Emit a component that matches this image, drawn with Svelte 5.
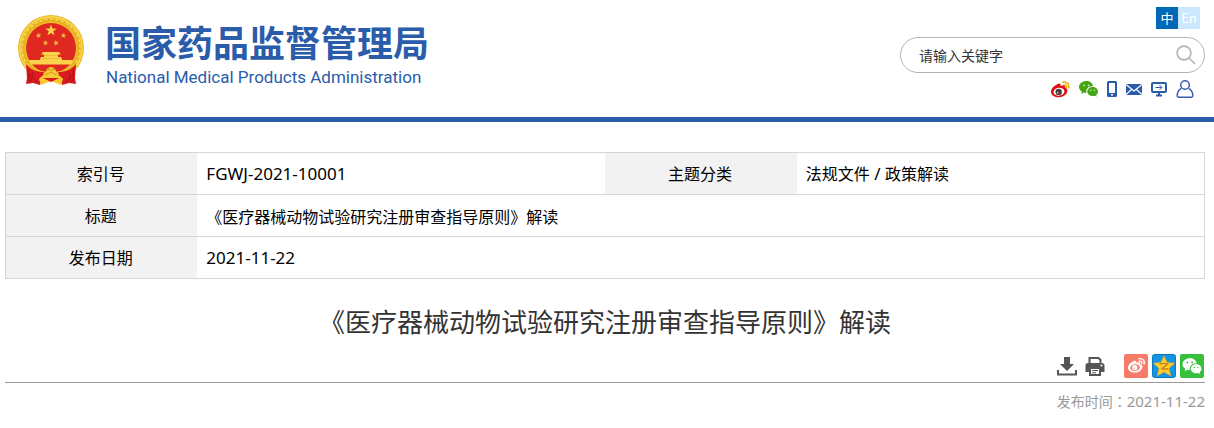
<script>
  let keyword = $state('');
  const title = '《医疗器械动物试验研究注册审查指导原则》解读';
  const separator = ' / ';
  const star = 'M0-10 2.4-3.2 9.5-3.1 3.8 1.2 5.9 8.1 0 4-5.9 8.1-3.8 1.2-9.5-3.1-2.4-3.2Z';
  const smallStars = [[20.5, 20.5, -10], [45.5, 20.5, 10], [27.5, 28, 12], [38, 28, -12]];
  const beads = Array.from({ length: 34 }, (_, i) => i * (360 / 34));
</script>

{#snippet wechat(color, eye)}
  <path fill={color} d="M7.6 1C3.4 1 0 3.6 0 7c0 1.900 1.100 3.500 2.800 4.600L2.200 14l2.700-1.400c.8.2 1.600.3 2.500.3C6.500 8.800 9.800 6 14.200 6 13.600 3.100 10.900 1 7.600 1Z" />
  <path fill={color} d="M19 11.500C19 8.900 16.600 7 13.700 7S8.300 8.900 8.300 11.500s2.400 4.500 5.400 4.500c.7 0 1.300-.1 1.900-.3l2 1.100-.5-1.900c1.200-.8 1.900-2 1.900-3.400Z" />
  <g fill={eye}>
    <circle cx="5" cy="5.300" r=".9" /><circle cx="9.600" cy="5.300" r=".9" />
    <circle cx="11.800" cy="10.300" r=".7" /><circle cx="15.400" cy="10.300" r=".7" />
  </g>
{/snippet}

<header>
  <a class="brand" href="#home">
    <svg class="emblem" viewBox="0 0 66 70" aria-hidden="true">
      <circle cx="33" cy="33" r="33" fill="#e9b21f" />
      <circle cx="33" cy="33" r="31" fill="none" stroke="#f8d64c" stroke-width="2" />
      {#each beads as angle}
        <path d="M31 3.500q3-1.500 5 0q-2 3.500-5 0" fill="#f9da5c" stroke="#e3a81c" stroke-width=".4" transform="rotate({angle} 33 33)" />
      {/each}
      <circle cx="33" cy="33" r="25.500" fill="#df2820" stroke="#f4c631" />
      <path d={star} fill="#fbd34b" transform="translate(33 15.500) scale(.6)" />
      {#each smallStars as [x, y, turn]}
        <path d={star} fill="#f3bb35" transform="translate({x} {y}) rotate({turn}) scale(.31)" />
      {/each}
      <path d="M25 37h16l2 2.500H23Zm1 2.500h14v2.500H26ZM23 42h20l1 2v4H22v-4ZM11 45h11v1h22v-1h11l-1.500 4.500h-41Z" fill="#fbd24b" />
      <path d="M24 43.500h18M26 40.500h14" stroke="#e69c20" stroke-width=".5" />
      <path d="M9 49.500c7 6 12 7 17 7l14 0c5 0 10-1 17-7l1 3-9 13H17L8 52Z" fill="#f3bb29" />
      <path d="M8 49c5 6 11 8 18 8l-4 13-7-2-7 1 1-6Z" fill="#d91b20" />
      <path d="M58 49c-5 6-11 8-18 8l4 13 7-2 7 1-1-6Z" fill="#d91b20" />
      <path d="M11 54v13m4-10-2 10m-2-8 8 9M55 54v13m-4-10 2 10m2-8-8 9" stroke="#a80f15" stroke-width=".8" fill="none" />
      <path d="M21 64c3-4 7-5 12-5s9 1 12 5l-2 6-10-4-10 4Z" fill="#f8c82f" />
      <path d="M25 63h16l-8 4Z" fill="#d91b20" />
      <circle cx="33" cy="57" r="5" fill="#f8cb37" />
      <path d="M28 55l3-1 2 2 2-2 3 1M28 60l5-3 5 3M31 52v3m4-3v3" stroke="#c98512" stroke-width=".8" fill="none" />
    </svg>
    <span class="names">
      <strong>国家药品监督管理局</strong>
      <span class="english">National Medical Products Administration</span>
    </span>
  </a>

  <div class="tools">
    <nav class="languages" aria-label="语言">
      <a class="active" href="#zh">中</a><a href="#en">En</a>
    </nav>
    <form class="search" onsubmit={(e) => e.preventDefault()}>
      <input type="text" aria-label="请输入关键字" placeholder="请输入关键字" bind:value={keyword} />
      <button type="submit" aria-label="搜索">
        <svg width="20" height="20" viewBox="0 0 20 20" fill="none" stroke="#b3b3b3" stroke-width="1.600">
          <circle cx="8" cy="8" r="6.900" /><path d="m13 13 6 6" />
        </svg>
      </button>
    </form>
    <nav class="links" aria-label="快捷入口">
      <a href="#weibo" aria-label="微博">
        <svg width="19" height="18" viewBox="0 0 19 18">
          <path d="M7 4c2-1 3 0 2.500 2 3-1.300 5-.7 4.400 1.500 2 .7 2.900 2 2.400 3.800C15.600 15 12 17.200 8 17.200c-4.500 0-8-2-8-5.500C0 8.500 4 5 7 4Z" fill="#e10b12" />
          <ellipse cx="7.900" cy="11.700" rx="5.500" ry="3.900" fill="#fff" transform="rotate(-8 8 11)" />
          <circle cx="7.700" cy="11.900" r="3.200" fill="#4a4040" /><circle cx="6.700" cy="12.700" r=".7" fill="#fff" />
          <path d="M12 2.200c4-.8 6.500 2 5.500 5.500M12.500 5c2-.4 3 .6 2.600 2.300" fill="none" stroke="#eeae13" stroke-width="1.700" stroke-linecap="round" />
        </svg>
      </a>
      <a href="#wechat" aria-label="微信">
        <svg width="19" height="18" viewBox="0 0 19 18">{@render wechat('#45a614', '#d5edc8')}</svg>
      </a>
      <a href="#mobile" aria-label="手机版">
        <svg width="10" height="18" viewBox="0 0 10 18">
          <path fill="#2a5caa" fill-rule="evenodd" d="M1.500 1h7Q10 1 10 2.500v13Q10 17 8.500 17h-7Q0 17 0 15.500v-13Q0 1 1.500 1ZM2 3v10h6V3Zm2 11v1.500h2V14Z" />
        </svg>
      </a>
      <a href="#mail" aria-label="邮箱">
        <svg width="16" height="18" viewBox="0 0 16 18">
          <path fill="#2a5caa" d="M0 4h16v11H0Z" />
          <path d="m0 4.500 8 6.500 8-6.500M0 14.500l5.500-5m10.500 5-5.500-5" fill="none" stroke="#fff" stroke-width="1.200" />
        </svg>
      </a>
      <a href="#service" aria-label="网上服务">
        <svg width="16" height="18" viewBox="0 0 16 18" fill="none" stroke="#2a5caa">
          <rect x="1" y="3" width="14" height="9" rx="1" stroke-width="2" />
          <path d="M8 12.500V15M5 15.500h6" stroke-width="2" /><path d="M4.500 7.500h6M8.500 5l2.500 2.500L8.500 10" />
        </svg>
      </a>
      <a href="#user" aria-label="个人中心">
        <svg width="18" height="18" viewBox="0 0 18 18" fill="none" stroke="#3c5cad" stroke-width="1.500">
          <circle cx="9" cy="5" r="4.300" /><path d="M5.300 8.300C2.500 9.800 1.200 12.500 1.200 15.500q0 1.700 1.800 1.700h12q1.800 0 1.800-1.700c0-3-1.300-5.700-4.100-7.200" />
        </svg>
      </a>
    </nav>
  </div>
</header>

<main>
  <table>
    <colgroup><col class="key" /><col class="value" /><col class="key" /><col class="value" /></colgroup>
    <tbody>
      <tr>
        <th scope="row">索引号</th><td><span class="latin">FGWJ-2021-10001</span></td>
        <th scope="row">主题分类</th><td>法规文件<span class="latin">{separator}</span>政策解读</td>
      </tr>
      <tr><th scope="row">标题</th><td colspan="3">{title}</td></tr>
      <tr><th scope="row">发布日期</th><td colspan="3"><span class="latin">2021-11-22</span></td></tr>
    </tbody>
  </table>

  <h1>{title}</h1>

  <div class="actions">
    <button type="button" aria-label="下载">
      <svg width="20" height="24" viewBox="0 0 20 24" fill="#555">
        <path d="M7 3h6v7h4l-7 7-7-7h4Z" /><path d="M1 16v4.500h18V16" fill="none" stroke="#555" stroke-width="2" />
      </svg>
    </button>
    <button type="button" aria-label="打印">
      <svg width="20" height="24" viewBox="0 0 20 24">
        <path d="M4.500 9V4h9l2 2v3" fill="#fff" stroke="#555" stroke-width="2" />
        <path d="M3 9h14q2.500 0 2.500 2.500V18H16v-4H4v4H.5v-6.500Q.5 9 3 9Z" fill="#555" />
        <path d="M5 14h10v7H5Z" fill="#fff" stroke="#555" stroke-width="2" /><path d="M7 16.500h6M7 18.800h4" stroke="#555" />
        <circle cx="16.500" cy="11.500" r="1" fill="#fff" />
      </svg>
    </button>
    <button class="share first" type="button" aria-label="分享到微博">
      <svg width="24" height="24" viewBox="0 0 24 24">
        <rect width="24" height="24" rx="2" fill="#f67b69" />
        <path d="M10 7c2-.8 2.800 0 2.200 1.800 3-1 4.500-.3 4 1.500 2 .6 2.600 1.600 2.200 3.200-.7 2.900-3.700 5-7.500 5-4 0-7-1.900-7-5C3.900 11 7.500 7.800 10 7Z" fill="#fff" />
        <ellipse cx="11" cy="13.600" rx="4.800" ry="3.400" fill="#f67b69" transform="rotate(-8 11 13)" />
        <circle cx="10.800" cy="13.700" r="2.600" fill="#fff" /><circle cx="10.200" cy="14.200" r=".6" fill="#f67b69" />
        <path d="M15 4.700c4-.6 6 2 5 5.300M15.300 7.200c2-.3 2.700.6 2.300 2.100" fill="none" stroke="#fff" stroke-width="1.400" stroke-linecap="round" />
      </svg>
    </button>
    <button class="share" type="button" aria-label="分享到QQ空间">
      <svg width="24" height="24" viewBox="0 0 24 24">
        <rect x=".5" y=".5" width="23" height="23" rx="2" fill="#1596e5" stroke="#0879c5" />
        <path d="m12 1.800 3 6.800 7.500.7-5.600 5 1.700 7.500-6.600-3.900-6.600 3.900 1.700-7.500-5.600-5L9 8.600Z" fill="#ffd02d" stroke="#f5a718" stroke-width=".7" />
        <path d="M7.500 10c3-.8 5.500-.8 8 0L10 14.700c2 .5 4 .5 6 .1" fill="none" stroke="#c98018" stroke-width="1.400" />
      </svg>
    </button>
    <button class="share" type="button" aria-label="分享到微信">
      <svg width="24" height="24" viewBox="0 0 24 24">
        <rect width="24" height="24" rx="2" fill="#36c03c" />
        <g transform="translate(2.500 3.200)">{@render wechat('#fff', '#36c03c')}</g>
      </svg>
    </button>
  </div>
  <p class="published">发布时间<span class="colon">：</span><time datetime="2021-11-22">2021-11-22</time></p>
</main>

<style>
  :global(body) {
    margin: 0;
    background: #fff;
    color: #000;
    font: 16px/24px "Noto Sans CJK SC", sans-serif;
  }
  a { color: inherit; text-decoration: none; }
  svg { display: block; }
  button { padding: 0; border: 0; background: none; cursor: pointer; }

  header {
    display: flex;
    justify-content: space-between;
    align-items: flex-start;
    padding: 7px 9px 19px 18px;
    border-bottom: 5px solid #2a5caa;
  }
  .brand { display: flex; gap: 21px; padding-top: 8px; color: #2a5caa; }
  .emblem { width: 66px; height: 70px; }
  .names { display: flex; flex-direction: column; white-space: nowrap; }
  strong { font-size: 36px; line-height: 52px; font-weight: 700; }
  .english { padding-left: 1px; font: 17px/20px Roboto, sans-serif; }

  .tools { display: flex; flex-direction: column; align-items: flex-end; }
  .languages {
    display: flex;
    margin-right: 5px;
    font-size: 13px;
    line-height: 22px;
    text-align: center;
    color: #fff;
  }
  .languages a { width: 22px; background: #cce8ff; }
  .languages .active { background: #0069b7; }
  .search {
    display: flex;
    align-items: center;
    box-sizing: border-box;
    width: 305px;
    height: 36px;
    margin: 8px 0 7px;
    padding: 0 8px 0 18px;
    border: 1px solid #b3b3b3;
    border-radius: 18px;
  }
  .search input {
    flex: 1;
    min-width: 0;
    padding: 0;
    border: 0;
    outline: 0;
    background: none;
    font: 14px/20px "Noto Sans CJK SC", sans-serif;
  }
  .search input::placeholder { color: #333; opacity: 1; }
  .links { display: flex; gap: 9px; margin-right: 11px; }

  main { padding: 30px 9px 12px 5px; }
  table { width: 100%; table-layout: fixed; border-collapse: collapse; border: 1px solid #d5d5d5; }
  .key { width: 16%; }
  .value { width: 34%; }
  tr { border-bottom: 1px solid #d5d5d5; }
  th, td { height: 41px; padding: 0 9px; font-weight: 400; line-height: 24px; }
  th { height: 39px; padding: 0 11px 2px 9px; background: #f2f2f2; }
  .latin { font-family: "Noto Sans", sans-serif; font-size: 17px; white-space: pre; }

  h1 {
    margin: 24px 0 15px;
    color: #333;
    font-size: 26px;
    font-weight: 400;
    line-height: 36px;
    text-align: center;
  }
  .actions {
    display: flex;
    justify-content: flex-end;
    gap: 8px;
    padding: 0 1px 4px 0;
    border-bottom: 1px solid #999;
  }
  .share { margin-left: -4px; }
  .share.first { margin-left: 11px; }
  .published { margin: 7px 0 0; color: #999; font-size: 14px; line-height: 22px; text-align: right; }
  .colon { font-family: "Noto Sans CJK TC", sans-serif; }
  time { font-family: "Noto Sans", sans-serif; font-size: 15px; }
</style>
